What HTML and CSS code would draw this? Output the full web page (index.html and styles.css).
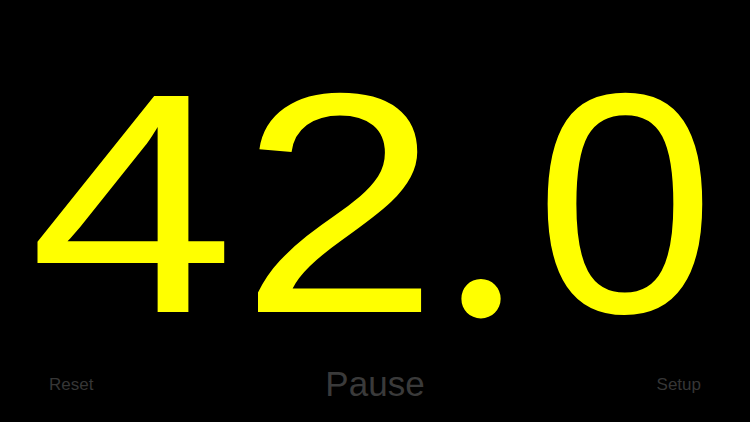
FILE: index.html
```html
<!DOCTYPE html>
<html>
<head>
<meta charset="utf-8">
<link rel="stylesheet" href="styles.css">
</head>
<body>
<div class="screen">
  <div class="display">
    <span class="ch ch-4">4</span>
    <span class="ch ch-2">2</span>
    <span class="ch ch-dot">.</span>
    <span class="ch ch-0">0</span>
  </div>
  <div class="controls">
    <span class="btn btn-small">Reset</span>
    <span class="btn btn-main">Pause</span>
    <span class="btn btn-small">Setup</span>
  </div>
</div>
</body>
</html>
```
FILE: styles.css
```css
html, body {
  margin: 0;
  padding: 0;
  background: #000;
}
.screen {
  width: 750px;
  height: 422px;
  overflow: hidden;
  background: #000;
  display: flex;
  flex-direction: column;
}
.display {
  margin-top: 47px;
  height: 314px;
  display: flex;
  align-items: flex-start;
  font-family: "Liberation Sans", Arial, sans-serif;
  font-size: 314px;
  line-height: 314px;
  color: #ffff00;
}
.ch {
  display: block;
  transform-origin: 0 0;
  white-space: nowrap;
}
.ch-4 {
  margin-left: 29px;
  width: 211px;
  transform: scaleX(1.18);
}
.ch-2 {
  width: 204px;
  transform: scaleX(1.14);
}
.ch-dot {
  font-family: Lato, sans-serif;
  width: 91px;
  margin-top: -9px;
}
.ch-0 {
  transform: scaleX(1.03);
}
.controls {
  margin-top: 5px;
  padding: 0 49px;
  display: flex;
  justify-content: space-between;
  align-items: flex-start;
  font-family: "Liberation Sans", Arial, sans-serif;
}
.btn-main {
  font-size: 35px;
  line-height: 35px;
  color: #3a3a3a;
}
.btn-small {
  margin-top: 10px;
  font-size: 17px;
  line-height: 17px;
  color: #363636;
}
```
